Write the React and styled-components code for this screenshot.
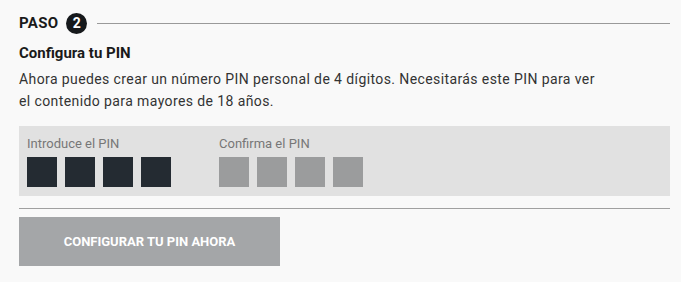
import React from 'react';
import styled, { createGlobalStyle } from 'styled-components';

const GlobalStyle = createGlobalStyle`
	html, body {
		margin: 0;
		padding: 0;
		background: #f9f9f9;
	}
	body {
		font-family: Roboto, "Liberation Sans", sans-serif;
		color: #222;
	}
`;

const Wrapper = styled.section`
	width: 651px;
	padding: 12px 11px 16px 19px;
`;

const StepHeader = styled.div`
	display: flex;
	align-items: center;
	height: 22px;
`;

const StepLabel = styled.span`
	font-size: 15px;
	font-weight: 700;
	color: #1a1a1a;
	letter-spacing: 0.3px;
`;

const StepNumber = styled.span`
	display: flex;
	align-items: center;
	justify-content: center;
	width: 21px;
	height: 21px;
	margin-left: 8px;
	border-radius: 50%;
	background: #16191c;
	color: #fff;
	font-size: 14px;
	font-weight: 700;
`;

const Rule = styled.hr`
	flex: 1;
	margin: 0 0 0 10px;
	border: 0;
	border-top: 1px solid ${(props) => props.tone || '#9a9a9a'};
`;

const Title = styled.h2`
	margin: 10px 0 0;
	font-size: 15px;
	font-weight: 700;
	line-height: 18px;
	color: #1a1a1a;
`;

const Text = styled.p`
	margin: 6px 0 0;
	width: 588px;
	font-size: 14px;
	letter-spacing: 0.4px;
	line-height: 22px;
	color: #333;
`;

const Panel = styled.div`
	display: flex;
	gap: 48px;
	margin-top: 14px;
	padding: 10px 8px 9px;
	background: #e1e1e1;
`;

const Field = styled.div`
	display: flex;
	flex-direction: column;
	gap: 6px;
`;

const FieldLabel = styled.span`
	font-size: 13px;
	line-height: 15px;
	color: #777;
`;

const Boxes = styled.div`
	display: flex;
	gap: 8px;
`;

const Box = styled.span`
	width: 30px;
	height: 30px;
	background: ${(props) => (props.filled ? '#242b32' : '#9b9c9d')};
`;

const Divider = styled(Rule)`
	margin: 12px 0 0;
	border-top-color: #a0a0a0;
`;

const Button = styled.button`
	display: block;
	width: 261px;
	height: 49px;
	margin-top: 8px;
	border: 0;
	background: #a4a6a8;
	color: #fff;
	font-family: Roboto, "Liberation Sans", sans-serif;
	font-size: 13px;
	font-weight: 700;
	text-transform: uppercase;
`;

const PinField = ({ label, filled }) => (
	<Field>
		<FieldLabel>{label}</FieldLabel>
		<Boxes>
			{[0, 1, 2, 3].map((i) => (
				<Box key={i} filled={filled} />
			))}
		</Boxes>
	</Field>
);

const App = () => {
	return (
		<>
			<GlobalStyle />
			<Wrapper>
				<StepHeader>
					<StepLabel>PASO</StepLabel>
					<StepNumber>2</StepNumber>
					<Rule />
				</StepHeader>
				<Title>Configura tu PIN</Title>
				<Text>
					Ahora puedes crear un número PIN personal de 4 dígitos. Necesitarás este PIN para ver el contenido
					para mayores de 18 años.
				</Text>
				<Panel>
					<PinField label="Introduce el PIN" filled />
					<PinField label="Confirma el PIN" />
				</Panel>
				<Divider />
				<Button>Configurar tu PIN ahora</Button>
			</Wrapper>
		</>
	);
};

export default App;
